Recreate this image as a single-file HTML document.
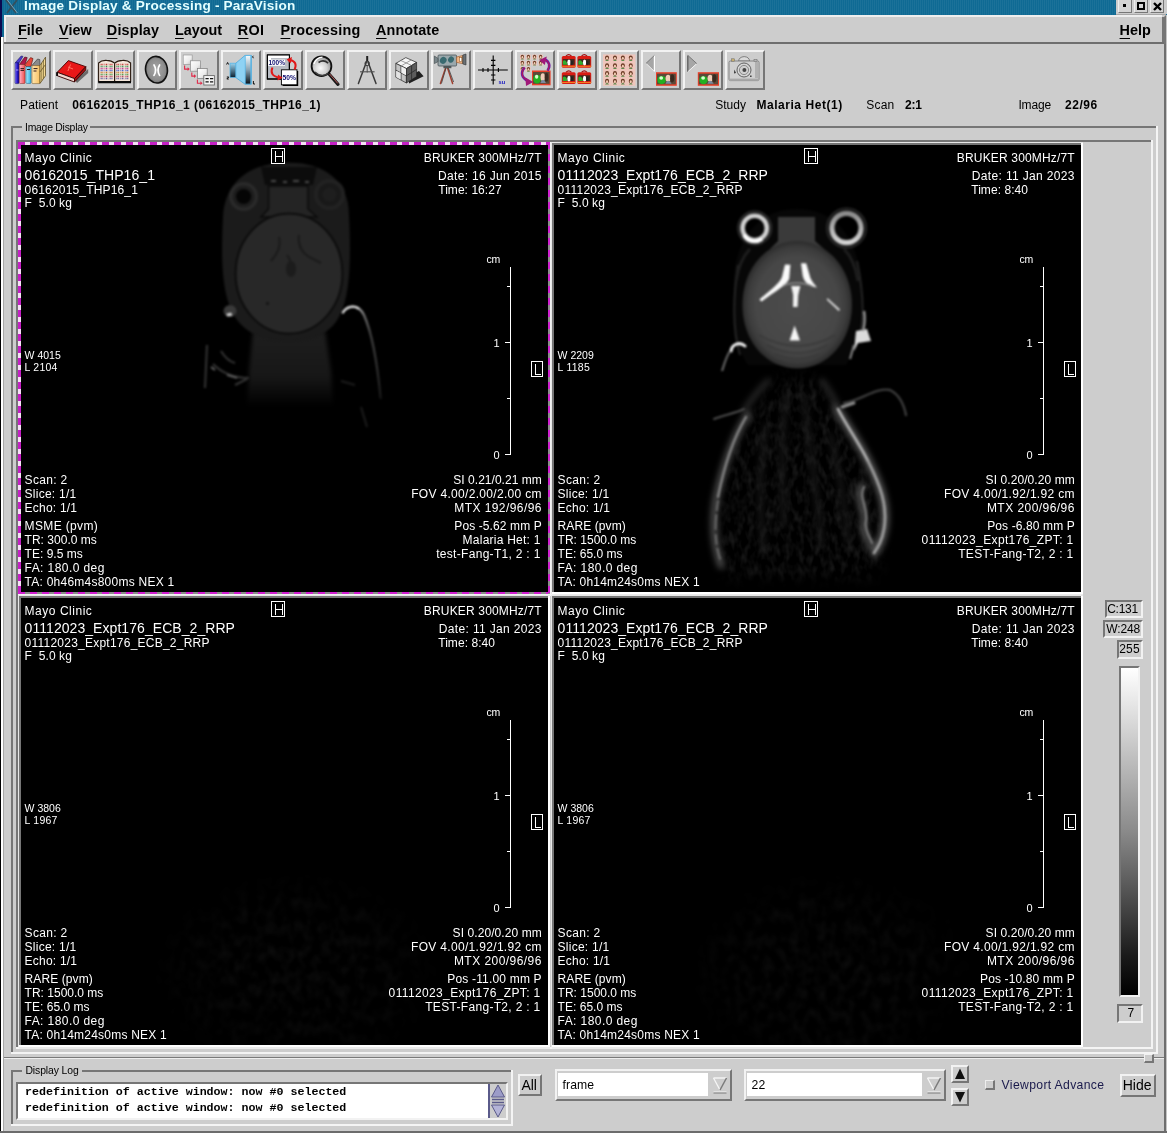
<!DOCTYPE html><html><head><meta charset="utf-8"><title>Image Display &amp; Processing - ParaVision</title><style>

html,body{margin:0;padding:0;}
body{width:1167px;height:1133px;overflow:hidden;background:#cdcdcd;position:relative;font-family:"Liberation Sans",sans-serif;color:#000;}
.a{position:absolute;}
.t{position:absolute;white-space:pre;line-height:14px;height:14px;}
.b{font-weight:bold;}
.raised{position:absolute;box-sizing:border-box;border:2px solid;border-color:#f2f2f2 #767676 #767676 #f2f2f2;background:#cdcdcd;}
.sunken{position:absolute;box-sizing:border-box;border:2px solid;border-color:#767676 #f2f2f2 #f2f2f2 #767676;}
.pt{position:absolute;white-space:pre;color:#fff;font-size:12.5px;line-height:14px;height:14px;}
.ptr{position:absolute;white-space:pre;color:#fff;font-size:12.5px;line-height:14px;height:14px;text-align:right;}
svg{position:absolute;overflow:visible;}

</style></head><body><div id="root" style="position:absolute;left:0;top:0;width:1167px;height:1133px;will-change:transform;">
<div class="a" style="left:0px;top:0px;width:1167px;height:15px;background:#0f6a94;background-image:repeating-linear-gradient(90deg,rgba(255,255,255,0.05) 0 1px,transparent 1px 2px);"></div>
<div class="a" style="left:0px;top:0px;width:2px;height:37px;background:#0a0a50;"></div>
<div class="a" style="left:2px;top:0px;width:2px;height:37px;background:#0f6a94;"></div>
<div class="a" style="left:0px;top:37px;width:1px;height:1096px;background:#000;"></div>
<div class="a" style="left:1px;top:37px;width:2px;height:1096px;background:#fff;"></div>
<div class="a" style="left:3px;top:37px;width:1px;height:1096px;background:#a8a8a8;"></div>
<svg style="left:4px;top:0" width="16" height="14" viewBox="0 0 16 14"><path d="M2 0 L12 13 M13 0 L3 13" stroke="#34505e" stroke-width="1.9" fill="none"/><path d="M3.4 0 L13.4 13" stroke="#8fb0c0" stroke-width="0.8" fill="none"/></svg>
<div class="t" style="left:24.0px;top:-1.49px;font-size:13.6px;font-weight:bold;color:#e4ffff;letter-spacing:0.188px;">Image Display &amp; Processing - ParaVision</div>
<div class="a" style="left:1116px;top:0px;width:51px;height:14px;background:#cdcdcd;"></div>
<div class="a" style="left:1116px;top:14px;width:50px;height:1px;background:#a8a8a8;"></div>
<div class="a" style="left:1118px;top:0px;width:14px;height:13px;background:#d4d4d4;border-right:1px solid #777;border-bottom:1px solid #777;border-left:1px solid #eee;box-sizing:border-box;"></div>
<div class="a" style="left:1134px;top:0px;width:14px;height:13px;background:#d4d4d4;border-right:1px solid #777;border-bottom:1px solid #777;border-left:1px solid #eee;box-sizing:border-box;"></div>
<div class="a" style="left:1150px;top:0px;width:14px;height:13px;background:#d4d4d4;border-right:1px solid #777;border-bottom:1px solid #777;border-left:1px solid #eee;box-sizing:border-box;"></div>
<div class="a" style="left:1123px;top:4px;width:3px;height:3px;background:#000;"></div>
<div class="a" style="left:1137px;top:2px;width:8px;height:8px;background:transparent;border:2px solid #000;box-sizing:border-box;"></div>
<svg style="left:1153px;top:2px" width="9" height="9" viewBox="0 0 9 9"><path d="M1 1 L8 8 M8 1 L1 8" stroke="#000" stroke-width="2.4" fill="none"/></svg>
<div class="a" style="left:1164px;top:44px;width:2px;height:1089px;background:#6e6e6e;"></div>
<div class="a" style="left:1166px;top:15px;width:1px;height:1118px;background:#c4c4c4;"></div>
<div class="a" style="left:1162px;top:17px;width:4px;height:27px;background:#767676;"></div>
<svg style="left:1162px;top:15px" width="4" height="4" viewBox="0 0 4 4"><path d="M4 0 L4 4 L0 4z" fill="#767676"/></svg>
<div class="a" style="left:0px;top:1131px;width:1167px;height:2px;background:#6c6c6c;"></div>
<div class="a" style="left:4px;top:15px;width:1158px;height:2px;background:#eeeeee;"></div>
<div class="a" style="left:4px;top:15px;width:2px;height:28px;background:#eeeeee;"></div>
<div class="a" style="left:4px;top:42px;width:1160px;height:2px;background:#6e6e6e;"></div>
<div class="t" style="left:18.0px;top:22.74px;font-size:14.4px;font-weight:bold;letter-spacing:0.026px;"><span style="text-decoration:underline;text-decoration-thickness:1px;text-underline-offset:2.5px">F</span>ile</div>
<div class="t" style="left:59.0px;top:22.74px;font-size:14.4px;font-weight:bold;letter-spacing:0.038px;"><span style="text-decoration:underline;text-decoration-thickness:1px;text-underline-offset:2.5px">V</span>iew</div>
<div class="t" style="left:106.8px;top:22.74px;font-size:14.4px;font-weight:bold;letter-spacing:0.171px;"><span style="text-decoration:underline;text-decoration-thickness:1px;text-underline-offset:2.5px">D</span>isplay</div>
<div class="t" style="left:175.0px;top:22.74px;font-size:14.4px;font-weight:bold;letter-spacing:-0.029px;"><span style="text-decoration:underline;text-decoration-thickness:1px;text-underline-offset:2.5px">L</span>ayout</div>
<div class="t" style="left:237.8px;top:22.74px;font-size:14.4px;font-weight:bold;letter-spacing:0.269px;"><span style="text-decoration:underline;text-decoration-thickness:1px;text-underline-offset:2.5px">R</span>OI</div>
<div class="t" style="left:280.5px;top:22.74px;font-size:14.4px;font-weight:bold;letter-spacing:0.241px;"><span style="text-decoration:underline;text-decoration-thickness:1px;text-underline-offset:2.5px">P</span>rocessing</div>
<div class="t" style="left:376px;top:22.74px;font-size:14.4px;font-weight:bold;letter-spacing:0.118px;"><span style="text-decoration:underline;text-decoration-thickness:1px;text-underline-offset:2.5px">A</span>nnotate</div>
<div class="t" style="left:1119.6px;top:22.74px;font-size:14.4px;font-weight:bold;letter-spacing:0.028px;"><span style="text-decoration:underline;text-decoration-thickness:1px;text-underline-offset:2.5px">H</span>elp</div>
<div class="t" style="left:20.0px;top:97.83px;font-size:12px;letter-spacing:0.134px;">Patient</div>
<div class="t" style="left:72.2px;top:97.83px;font-size:12px;font-weight:bold;letter-spacing:0.453px;">06162015_THP16_1 (06162015_THP16_1)</div>
<div class="t" style="left:715.2px;top:97.83px;font-size:12px;letter-spacing:0.042px;">Study</div>
<div class="t" style="left:756.4px;top:97.83px;font-size:12px;font-weight:bold;letter-spacing:0.550px;">Malaria Het(1)</div>
<div class="t" style="left:866.3px;top:97.83px;font-size:12px;letter-spacing:0.185px;">Scan</div>
<div class="t" style="left:905.0px;top:97.83px;font-size:12px;font-weight:bold;letter-spacing:-0.148px;">2:1</div>
<div class="t" style="left:1018.4px;top:97.83px;font-size:12px;letter-spacing:-0.132px;">Image</div>
<div class="t" style="left:1065.0px;top:97.83px;font-size:12px;font-weight:bold;letter-spacing:0.514px;">22/96</div>
<div class="raised" style="left:11px;top:50px;width:40px;height:40px;"></div>
<svg style="left:11px;top:50px" width="40" height="40" viewBox="0 0 40 40">
<defs><linearGradient id="gpk" x1="0" x2="1"><stop offset="0" stop-color="#ffb0c8"/><stop offset="1" stop-color="#f0504a"/></linearGradient>
<linearGradient id="gbl" x1="0" x2="1"><stop offset="0" stop-color="#9a8cff"/><stop offset="0.5" stop-color="#2a1ad0"/><stop offset="1" stop-color="#1a0a90"/></linearGradient>
<linearGradient id="gcy" x1="0" x2="1"><stop offset="0" stop-color="#a8ecff"/><stop offset="1" stop-color="#38b0e0"/></linearGradient>
<linearGradient id="gyl" x1="0" x2="1"><stop offset="0" stop-color="#ffe6b0"/><stop offset="1" stop-color="#f8c060"/></linearGradient></defs>
<path d="M4 13 L10.2 6 L12 6.4 L8 13z" fill="#4a3ad0" stroke="#181860" stroke-width="0.6"/>
<path d="M8.4 14.5 L13.8 7 L16.2 7.6 L14 14.5z" fill="#b01848" stroke="#400818" stroke-width="0.6"/>
<path d="M14 14.6 L19.6 7.6 L22 8.6 L19.8 16.6 L15 16.6z" fill="#e8483a" stroke="#501008" stroke-width="0.6"/>
<path d="M20.6 15.8 L26.6 9 L28.8 9.6 L29 15.8z" fill="#8a8a8a" stroke="#333" stroke-width="0.6"/>
<rect x="4" y="12.8" width="4" height="20.8" rx="0.8" fill="url(#gbl)" stroke="#101060" stroke-width="0.5"/>
<rect x="8.4" y="14.5" width="5.6" height="19" rx="0.8" fill="url(#gpk)" stroke="#802020" stroke-width="0.5"/>
<rect x="15" y="16.7" width="5" height="16.7" rx="0.8" fill="url(#gcy)" stroke="#105a80" stroke-width="0.5"/>
<rect x="21" y="15.6" width="8" height="18" rx="0.8" fill="url(#gyl)" stroke="#70501a" stroke-width="0.5"/>
<path d="M29 15.6 L34.5 7.2 L34.5 25.8 L29 33.4z" fill="#ffe49a" stroke="#5a4a20" stroke-width="0.8"/>
<path d="M30.8 12.8 L30.8 30.6 M32.6 10 L32.6 28.2 M29 22 L34.5 14.5" stroke="#5a4a20" stroke-width="0.7" fill="none"/>
<path d="M9.5 18.6h3.5 M9.5 20.4h3.5 M16 19.5h3 M22.5 18.6h4 M22.5 21h3" stroke="#301818" stroke-width="1"/>
<path d="M5 20h2.4" stroke="#c0b8ff" stroke-width="0.8"/>
</svg>
<div class="raised" style="left:53px;top:50px;width:40px;height:40px;"></div>
<svg style="left:53px;top:50px" width="40" height="40" viewBox="0 0 40 40">
<path d="M22 30 L35.2 19 L35.2 23 L24 33z" fill="#6a6a6a"/>
<path d="M4.2 22.3 L15.4 10.6 L32.8 16.7 L21.5 28.6z" fill="#e81818" stroke="#400" stroke-width="0.9"/>
<path d="M4.2 22.3 L21.5 28.6 L21.5 32 L4.4 25.8z" fill="#f4d8d0" stroke="#300" stroke-width="0.9"/>
<path d="M21.5 28.6 L32.8 16.7 L32.8 20 L21.5 32z" fill="#a01010" stroke="#300" stroke-width="0.8"/>
<path d="M4 22.2 L4 25.9" stroke="#000" stroke-width="1.6"/>
<path d="M15 17 l5 2 M17.5 14.5 l-2.6 6.5" stroke="#ff7a6a" stroke-width="0.9"/>
</svg>
<div class="raised" style="left:95px;top:50px;width:40px;height:40px;"></div>
<svg style="left:95px;top:50px" width="40" height="40" viewBox="0 0 40 40">
<path d="M3.6 13 q3 -3 8 -2.6 q5 0 8 2.8 q3 -2.8 8 -2.8 q5 -0.4 8 2.6 L35.6 31.5 L3.6 31.5z" fill="#f4e6da" stroke="#2a1a10" stroke-width="1.1"/>
<path d="M3.2 31 L36 31 L36 33.2 L3.2 33.2z" fill="#0a0a0a"/>
<path d="M19.6 13.2 L19.6 31" stroke="#2a1a10" stroke-width="1.2"/>
<g stroke-width="1.5" stroke-dasharray="1.1 0.7">
<path d="M5.6 14.6h12.4 M21.4 14.6h12.4" stroke="#c83838"/><path d="M5.6 16.6h12.4 M21.4 16.6h12.4" stroke="#309858"/>
<path d="M5.6 18.6h12.4 M21.4 18.6h12.4" stroke="#c03090"/><path d="M5.6 20.6h12.4 M21.4 20.6h12.4" stroke="#3858c8"/>
<path d="M5.6 22.6h12.4 M21.4 22.6h12.4" stroke="#c87828"/><path d="M5.6 24.6h12.4 M21.4 24.6h12.4" stroke="#409848"/>
<path d="M5.6 26.6h12.4 M21.4 26.6h12.4" stroke="#b03858"/><path d="M5.6 28.6h12.4 M21.4 28.6h12.4" stroke="#5a5a9a"/></g>
<path d="M9 13.5 v16 M13.4 13.5 v16 M25 13.5 v16 M29.6 13.5 v16" stroke="#f4e6da" stroke-width="0.9"/>
</svg>
<div class="raised" style="left:137px;top:50px;width:40px;height:40px;"></div>
<svg style="left:137px;top:50px" width="40" height="40" viewBox="0 0 40 40">
<defs><radialGradient id="gbr"><stop offset="0" stop-color="#a8a8a8"/><stop offset="0.8" stop-color="#8c8c8c"/><stop offset="1" stop-color="#707070"/></radialGradient></defs>
<ellipse cx="19.5" cy="19.7" rx="10.9" ry="13.4" fill="url(#gbr)" stroke="#101010" stroke-width="1.6" transform="rotate(-8 19.5 19.7)"/>
<path d="M17 15 q3.2 5 0 10.4 M22.6 15 q-3.2 5 0 10.4" stroke="#fff" stroke-width="1.7" fill="none" stroke-linecap="round"/>
</svg>
<div class="raised" style="left:179px;top:50px;width:40px;height:40px;"></div>
<svg style="left:179px;top:50px" width="40" height="40" viewBox="0 0 40 40">
<defs><linearGradient id="gsq" x1="0" y1="0" x2="1" y2="1"><stop offset="0" stop-color="#fff"/><stop offset="0.6" stop-color="#ececec"/><stop offset="1" stop-color="#b8b8b8"/></linearGradient></defs>
<rect x="4.2" y="5" width="9" height="9.4" fill="url(#gsq)" stroke="#9a9a9a" stroke-width="0.7"/>
<rect x="11.4" y="10.8" width="10" height="10.4" fill="url(#gsq)" stroke="#8a8a8a" stroke-width="0.7"/>
<rect x="18.6" y="18.6" width="9.6" height="9.8" fill="url(#gsq)" stroke="#7a7a7a" stroke-width="0.7"/>
<rect x="24.8" y="25.6" width="10.6" height="9.4" fill="#f4f4f4" stroke="#6a6a6a" stroke-width="0.9"/>
<path d="M26.5 28.6h3.2 M31 28.6h3.2 M26.5 31.8h3.2 M31 31.8h3.2" stroke="#111" stroke-width="1.3"/>
<path d="M5.6 15.5 v3.6 h3.4 M12.8 22.5 v3.6 h2.6 M18.4 29.6 v3.6 h3.4" stroke="#e02848" stroke-width="1.1" fill="none"/>
<path d="M8.6 17.2 l2.2 1.9 l-2.2 1.9z M15 24.2 l2.2 1.9 l-2.2 1.9z M21.4 31.3 l2.2 1.9 l-2.2 1.9z" fill="#e02848"/>
</svg>
<div class="raised" style="left:221px;top:50px;width:40px;height:40px;"></div>
<svg style="left:221px;top:50px" width="40" height="40" viewBox="0 0 40 40">
<defs><linearGradient id="glv1" x1="0" y1="0" x2="0" y2="1"><stop offset="0" stop-color="#9ad4f0"/><stop offset="1" stop-color="#0a2030"/></linearGradient>
<linearGradient id="glv2" x1="0" y1="0" x2="0" y2="1"><stop offset="0" stop-color="#f4fbff"/><stop offset="0.5" stop-color="#8aa4b4"/><stop offset="1" stop-color="#081018"/></linearGradient></defs>
<path d="M14.6 13.4 L24 5.4 L30.4 5.4 L30.4 34.2 L24 34.2 L14.6 27.4z" fill="#8ed2f4" stroke="#48a8dc" stroke-width="0.8"/>
<rect x="9" y="13.2" width="5.8" height="14.2" fill="url(#glv1)" stroke="#58b4e4" stroke-width="0.8"/>
<rect x="24.2" y="5.6" width="5.6" height="28.4" fill="url(#glv2)" stroke="#58b4e4" stroke-width="0.8"/>
<path d="M5.6 14.5 l1 -2 l1 2 M5.8 27 h2 l-2 2 h2 M32.4 5.8 q-1.6 0.8 0 2.4 M32.4 31 v3 h1.6" stroke="#000" stroke-width="0.9" fill="none"/>
</svg>
<div class="raised" style="left:263px;top:50px;width:40px;height:40px;"></div>
<svg style="left:263px;top:50px" width="40" height="40" viewBox="0 0 40 40">
<rect x="4.4" y="5" width="22" height="24" fill="#b8bcc4" stroke="#000" stroke-width="1.1"/>
<path d="M4.4 12.6 L4.4 5 L26.4 5 L26.4 8 L8 8 L8 12.6z" fill="#fff"/>
<rect x="4.4" y="5" width="22" height="24" fill="none" stroke="#000" stroke-width="1.1"/>
<rect x="5" y="9.6" width="17" height="6.2" fill="#fff"/>
<rect x="19.6" y="21" width="15.6" height="15" fill="#000"/>
<rect x="18.4" y="19.8" width="15.6" height="15" fill="#fff" stroke="#000" stroke-width="0.9"/>
<text x="5.4" y="15" font-family="Liberation Sans" font-weight="bold" font-size="6.6" fill="#101070" textLength="16.6" lengthAdjust="spacingAndGlyphs">100%</text>
<text x="19.6" y="30.4" font-family="Liberation Sans" font-weight="bold" font-size="6.8" fill="#101070" textLength="13.4" lengthAdjust="spacingAndGlyphs">50%</text>
<path d="M9.4 17.5 q-3.2 8.5 7 10" stroke="#e01818" stroke-width="2" fill="none"/><path d="M15 24.6 l4.6 3.2 l-5 2.8z" fill="#e01818"/>
<path d="M31.6 19.6 q3.4 -7.8 -4.6 -9.6" stroke="#e01818" stroke-width="2" fill="none"/><path d="M29 7 l-5.4 2.6 l4 4z" fill="#e01818"/>
</svg>
<div class="raised" style="left:305px;top:50px;width:40px;height:40px;"></div>
<svg style="left:305px;top:50px" width="40" height="40" viewBox="0 0 40 40">
<defs><radialGradient id="gmg" cx="0.45" cy="0.6" r="0.6"><stop offset="0" stop-color="#fafafa"/><stop offset="0.55" stop-color="#d0d0d0"/><stop offset="1" stop-color="#8a8a8a"/></radialGradient></defs>
<path d="M24 24 L33 34.4" stroke="#181818" stroke-width="3.2" stroke-linecap="round"/>
<path d="M24.6 24 L32.8 33.4" stroke="#c86060" stroke-width="0.9"/>
<circle cx="16.5" cy="16.2" r="9.9" fill="url(#gmg)" stroke="#101010" stroke-width="1.8"/>
<path d="M9 14 q2 -6.5 8.5 -6.8" stroke="#fff" stroke-width="1.3" fill="none"/>
<path d="M13.5 12.5 q5 -3.4 9.6 0.6" stroke="#303030" stroke-width="1.6" fill="none"/>
<path d="M10 22 q6 6 13.4 1.5" stroke="#404040" stroke-width="1.2" fill="none"/>
</svg>
<div class="raised" style="left:347px;top:50px;width:40px;height:40px;"></div>
<svg style="left:347px;top:50px" width="40" height="40" viewBox="0 0 40 40">
<path d="M20.2 6 L20.2 11" stroke="#202020" stroke-width="2"/>
<circle cx="20.2" cy="13.4" r="2.2" fill="none" stroke="#303030" stroke-width="1"/>
<path d="M19.4 12 L11.4 33.6 M21 12 L29 33.6" stroke="#3a3a3a" stroke-width="1.5" fill="none" stroke-linecap="round"/>
<path d="M13 21.8 L27.6 21.8" stroke="#505050" stroke-width="1.1"/>
<path d="M20.2 15.6 L20.2 22.5" stroke="#505050" stroke-width="1"/>
</svg>
<div class="raised" style="left:389px;top:50px;width:40px;height:40px;"></div>
<svg style="left:389px;top:50px" width="40" height="40" viewBox="0 0 40 40">
<path d="M20 33.5 L34.6 26.2 L30 21 L20 26z" fill="#202020"/>
<path d="M6.8 13.4 L16.8 7.6 L27.6 12.4 L17.4 18.6z" fill="#f6f6f6" stroke="#222" stroke-width="0.7"/>
<path d="M6.8 13.4 L17.4 18.6 L17.4 33 L6.8 27.2z" fill="#c4c4c4" stroke="#222" stroke-width="0.7"/>
<path d="M17.4 18.6 L27.6 12.4 L27.6 26.6 L17.4 33z" fill="#5c5c5c" stroke="#222" stroke-width="0.7"/>
<path d="M11.8 10.5 L22.6 15.4 M12 16 L22.2 10" stroke="#8a8a8a" stroke-width="0.8"/>
<path d="M6.8 20.2 L17.4 25.8 L27.6 19.4 M12 16.2 L12 30 M22.6 15.4 L22.6 29.8" stroke="#2a2a2a" stroke-width="0.8" fill="none"/>
<path d="M12.4 16.6 L17 18.9 L17 25.2 L12.4 22.8z" fill="#f0f0f0"/>
<path d="M7.2 20.8 L11.6 23 L11.6 29.4 L7.2 27z" fill="#e4e4e4"/>
</svg>
<div class="raised" style="left:431px;top:50px;width:40px;height:40px;"></div>
<svg style="left:431px;top:50px" width="40" height="40" viewBox="0 0 40 40">
<path d="M14.6 18 L9.4 33.6 M16.6 18 L21.6 33.6" stroke="#a04030" stroke-width="1.5" stroke-linecap="round"/>
<path d="M15 18 L10.4 33.6 M17.4 18 L22.6 32" stroke="#404040" stroke-width="0.8"/>
<rect x="12.4" y="15.8" width="8" height="2.4" fill="#505858"/>
<rect x="7" y="5" width="18.6" height="11" rx="1" fill="#9aa8ac" stroke="#4a5458" stroke-width="0.8"/>
<path d="M3.4 6 L7 8.4 L7 11.6 L3.4 13.6z" fill="#7a868a" stroke="#3a4448" stroke-width="0.6"/>
<ellipse cx="12.2" cy="10.4" rx="3.2" ry="3.6" fill="#3a6a70" transform="rotate(35 12.2 10.4)"/>
<ellipse cx="20" cy="9.6" rx="2.8" ry="3.2" fill="#3a6a70" transform="rotate(35 20 9.6)"/>
<path d="M25.6 7 L31.6 5.6 L31.6 13.6 L25.6 12.4z" fill="#f4b888" stroke="#a06030" stroke-width="0.7"/>
<rect x="28.6" y="7.6" width="2.2" height="4" fill="#fff" stroke="#805020" stroke-width="0.5"/>
<path d="M31.8 5 L35 4 L35 15 L31.8 14z" fill="#6a7074" stroke="#303436" stroke-width="0.6"/>
</svg>
<div class="raised" style="left:473px;top:50px;width:40px;height:40px;"></div>
<svg style="left:473px;top:50px" width="40" height="40" viewBox="0 0 40 40">
<path d="M5 20 H34.8 M20.2 5.4 V34.6" stroke="#000" stroke-width="1.1"/>
<path d="M18 10.4h4.4 M18 15.4h4.4 M18 25h4.4 M18 30h4.4 M10 18v4 M15 18v4 M25.4 18v4" stroke="#000" stroke-width="1.1"/>
<text x="25.6" y="34.4" font-family="Liberation Sans" font-weight="bold" font-size="5.6" fill="#1010c0">su</text>
</svg>
<div class="raised" style="left:515px;top:50px;width:40px;height:40px;"></div>
<svg style="left:515px;top:50px" width="40" height="40" viewBox="0 0 40 40"><rect x="5.0" y="4.6" width="4.68" height="4.992000000000001" fill="#efc6bc"/><path d="M5.78 9.436 q1.56 -2.34 3.12 0z" fill="#5b8a4a"/><ellipse cx="7.34" cy="6.628" rx="1.6380000000000001" ry="1.8719999999999999" fill="#6b3a24"/><ellipse cx="7.34" cy="7.1739999999999995" rx="0.8580000000000001" ry="1.17" fill="#f2cdb4"/><rect x="11.1" y="4.6" width="4.68" height="4.992000000000001" fill="#efc6bc"/><path d="M11.879999999999999 9.436 q1.56 -2.34 3.12 0z" fill="#5b8a4a"/><ellipse cx="13.44" cy="6.628" rx="1.6380000000000001" ry="1.8719999999999999" fill="#6b3a24"/><ellipse cx="13.44" cy="7.1739999999999995" rx="0.8580000000000001" ry="1.17" fill="#f2cdb4"/><rect x="17.2" y="4.6" width="4.68" height="4.992000000000001" fill="#efc6bc"/><path d="M17.98 9.436 q1.56 -2.34 3.12 0z" fill="#5b8a4a"/><ellipse cx="19.54" cy="6.628" rx="1.6380000000000001" ry="1.8719999999999999" fill="#6b3a24"/><ellipse cx="19.54" cy="7.1739999999999995" rx="0.8580000000000001" ry="1.17" fill="#f2cdb4"/><rect x="23.299999999999997" y="4.6" width="4.68" height="4.992000000000001" fill="#efc6bc"/><path d="M24.08 9.436 q1.56 -2.34 3.12 0z" fill="#5b8a4a"/><ellipse cx="25.639999999999997" cy="6.628" rx="1.6380000000000001" ry="1.8719999999999999" fill="#6b3a24"/><ellipse cx="25.639999999999997" cy="7.1739999999999995" rx="0.8580000000000001" ry="1.17" fill="#f2cdb4"/><rect x="5.0" y="10.7" width="4.68" height="4.992000000000001" fill="#efc6bc"/><path d="M5.78 15.536 q1.56 -2.34 3.12 0z" fill="#5b8a4a"/><ellipse cx="7.34" cy="12.728" rx="1.6380000000000001" ry="1.8719999999999999" fill="#6b3a24"/><ellipse cx="7.34" cy="13.274" rx="0.8580000000000001" ry="1.17" fill="#f2cdb4"/><rect x="11.1" y="10.7" width="4.68" height="4.992000000000001" fill="#efc6bc"/><path d="M11.879999999999999 15.536 q1.56 -2.34 3.12 0z" fill="#5b8a4a"/><ellipse cx="13.44" cy="12.728" rx="1.6380000000000001" ry="1.8719999999999999" fill="#6b3a24"/><ellipse cx="13.44" cy="13.274" rx="0.8580000000000001" ry="1.17" fill="#f2cdb4"/><rect x="17.2" y="10.7" width="4.68" height="4.992000000000001" fill="#efc6bc"/><path d="M17.98 15.536 q1.56 -2.34 3.12 0z" fill="#5b8a4a"/><ellipse cx="19.54" cy="12.728" rx="1.6380000000000001" ry="1.8719999999999999" fill="#6b3a24"/><ellipse cx="19.54" cy="13.274" rx="0.8580000000000001" ry="1.17" fill="#f2cdb4"/><rect x="23.299999999999997" y="10.7" width="4.68" height="4.992000000000001" fill="#efc6bc"/><path d="M24.08 15.536 q1.56 -2.34 3.12 0z" fill="#5b8a4a"/><ellipse cx="25.639999999999997" cy="12.728" rx="1.6380000000000001" ry="1.8719999999999999" fill="#6b3a24"/><ellipse cx="25.639999999999997" cy="13.274" rx="0.8580000000000001" ry="1.17" fill="#f2cdb4"/><rect x="5.0" y="16.799999999999997" width="4.68" height="4.992000000000001" fill="#efc6bc"/><path d="M5.78 21.635999999999996 q1.56 -2.34 3.12 0z" fill="#5b8a4a"/><ellipse cx="7.34" cy="18.827999999999996" rx="1.6380000000000001" ry="1.8719999999999999" fill="#6b3a24"/><ellipse cx="7.34" cy="19.373999999999995" rx="0.8580000000000001" ry="1.17" fill="#f2cdb4"/><rect x="11.1" y="16.799999999999997" width="4.68" height="4.992000000000001" fill="#efc6bc"/><path d="M11.879999999999999 21.635999999999996 q1.56 -2.34 3.12 0z" fill="#5b8a4a"/><ellipse cx="13.44" cy="18.827999999999996" rx="1.6380000000000001" ry="1.8719999999999999" fill="#6b3a24"/><ellipse cx="13.44" cy="19.373999999999995" rx="0.8580000000000001" ry="1.17" fill="#f2cdb4"/><rect x="17" y="20.5" width="18.6" height="14.8" fill="#e8402a"/><rect x="18" y="22.0" width="16.6" height="11.8" fill="#5a4a3a"/><ellipse cx="22.022000000000002" cy="29.084" rx="3.7200000000000006" ry="4.44" fill="#22b022"/><ellipse cx="21.65" cy="26.716" rx="1.6740000000000002" ry="1.9240000000000002" fill="#d8ffd0"/><ellipse cx="27.788" cy="27.16" rx="2.232" ry="3.8480000000000003" fill="#f0cdb8"/><path d="M25.37 33.08 q2.418 -6.66 5.58 0z" fill="#7a8aa0"/><ellipse cx="31.508000000000003" cy="27.16" rx="1.8600000000000003" ry="4.44" fill="#3a2a20"/>
<path d="M9.6 17.5 q-6.5 8 3.4 13.6" stroke="#6a1aa8" stroke-width="2.6" fill="none"/><path d="M9.6 17.5 q-6.5 8 3.4 13.6" stroke="#c01848" stroke-width="1" fill="none"/>
<path d="M10.4 27.6 l8 4.4 l-7.4 4z" fill="#a01878"/>
<path d="M32.6 20.6 q4.6 -7.4 -3.4 -11.6" stroke="#6a1aa8" stroke-width="2.6" fill="none"/><path d="M32.6 20.6 q4.6 -7.4 -3.4 -11.6" stroke="#c01848" stroke-width="1" fill="none"/>
<path d="M31.8 6.6 l-7.6 3.4 l5.6 5z" fill="#a01878"/>
</svg>
<div class="raised" style="left:557px;top:50px;width:40px;height:40px;"></div>
<svg style="left:557px;top:50px" width="40" height="40" viewBox="0 0 40 40"><path d="M8.94 6.1 q2.7600000000000002 -3 5.5200000000000005 0" stroke="#a01010" stroke-width="1.2" fill="none"/><rect x="4.8" y="6.1" width="13.8" height="11.7" rx="1.5" fill="#d81c14"/><rect x="5.8" y="9.1" width="11.8" height="5.699999999999999" fill="#40281c"/><path d="M5.8 14.799999999999997 L5.8 11.1 q2.208 -2 4.14 1.5 L10.596 14.799999999999997z" fill="#2fae2f"/><ellipse cx="11.976" cy="12.52" rx="1.656" ry="2.904" fill="#fff"/><ellipse cx="14.736" cy="12.783999999999999" rx="1.242" ry="2.376" fill="#222"/><rect x="4.8" y="15.799999999999997" width="13.8" height="1" fill="#f08020"/><path d="M24.54 6.1 q2.7600000000000002 -3 5.5200000000000005 0" stroke="#a01010" stroke-width="1.2" fill="none"/><rect x="20.4" y="6.1" width="13.8" height="11.7" rx="1.5" fill="#d81c14"/><rect x="21.4" y="9.1" width="11.8" height="5.699999999999999" fill="#40281c"/><path d="M21.4 14.799999999999997 L21.4 11.1 q2.208 -2 4.14 1.5 L26.195999999999998 14.799999999999997z" fill="#2fae2f"/><ellipse cx="27.576" cy="12.52" rx="1.656" ry="2.904" fill="#fff"/><ellipse cx="30.336" cy="12.783999999999999" rx="1.242" ry="2.376" fill="#222"/><rect x="20.4" y="15.799999999999997" width="13.8" height="1" fill="#f08020"/><path d="M8.94 22.3 q2.7600000000000002 -3 5.5200000000000005 0" stroke="#a01010" stroke-width="1.2" fill="none"/><rect x="4.8" y="22.3" width="13.8" height="11.7" rx="1.5" fill="#d81c14"/><rect x="5.8" y="25.3" width="11.8" height="5.699999999999999" fill="#40281c"/><path d="M5.8 31.0 L5.8 27.3 q2.208 -2 4.14 1.5 L10.596 31.0z" fill="#2fae2f"/><ellipse cx="11.976" cy="28.72" rx="1.656" ry="2.904" fill="#fff"/><ellipse cx="14.736" cy="28.984" rx="1.242" ry="2.376" fill="#222"/><rect x="4.8" y="32.0" width="13.8" height="1" fill="#f08020"/><path d="M24.54 22.3 q2.7600000000000002 -3 5.5200000000000005 0" stroke="#a01010" stroke-width="1.2" fill="none"/><rect x="20.4" y="22.3" width="13.8" height="11.7" rx="1.5" fill="#d81c14"/><rect x="21.4" y="25.3" width="11.8" height="5.699999999999999" fill="#40281c"/><path d="M21.4 31.0 L21.4 27.3 q2.208 -2 4.14 1.5 L26.195999999999998 31.0z" fill="#2fae2f"/><ellipse cx="27.576" cy="28.72" rx="1.656" ry="2.904" fill="#fff"/><ellipse cx="30.336" cy="28.984" rx="1.242" ry="2.376" fill="#222"/><rect x="20.4" y="32.0" width="13.8" height="1" fill="#f08020"/></svg>
<div class="raised" style="left:599px;top:50px;width:40px;height:40px;"></div>
<svg style="left:599px;top:50px" width="40" height="40" viewBox="0 0 40 40"><rect x="4" y="4.4" width="32.4" height="31.4" fill="#efc6bc"/><rect x="5.2" y="5.2" width="5.699999999999999" height="6.08" fill="#efc6bc"/><path d="M6.15 11.09 q1.9 -2.8499999999999996 3.8 0z" fill="#5b8a4a"/><ellipse cx="8.05" cy="7.67" rx="1.9949999999999999" ry="2.28" fill="#6b3a24"/><ellipse cx="8.05" cy="8.335" rx="1.045" ry="1.4249999999999998" fill="#f2cdb4"/><rect x="13.100000000000001" y="5.2" width="5.699999999999999" height="6.08" fill="#efc6bc"/><path d="M14.05 11.09 q1.9 -2.8499999999999996 3.8 0z" fill="#5b8a4a"/><ellipse cx="15.950000000000001" cy="7.67" rx="1.9949999999999999" ry="2.28" fill="#6b3a24"/><ellipse cx="15.950000000000001" cy="8.335" rx="1.045" ry="1.4249999999999998" fill="#f2cdb4"/><rect x="21.0" y="5.2" width="5.699999999999999" height="6.08" fill="#efc6bc"/><path d="M21.95 11.09 q1.9 -2.8499999999999996 3.8 0z" fill="#5b8a4a"/><ellipse cx="23.85" cy="7.67" rx="1.9949999999999999" ry="2.28" fill="#6b3a24"/><ellipse cx="23.85" cy="8.335" rx="1.045" ry="1.4249999999999998" fill="#f2cdb4"/><rect x="28.900000000000002" y="5.2" width="5.699999999999999" height="6.08" fill="#efc6bc"/><path d="M29.85 11.09 q1.9 -2.8499999999999996 3.8 0z" fill="#5b8a4a"/><ellipse cx="31.75" cy="7.67" rx="1.9949999999999999" ry="2.28" fill="#6b3a24"/><ellipse cx="31.75" cy="8.335" rx="1.045" ry="1.4249999999999998" fill="#f2cdb4"/><rect x="5.2" y="13.0" width="5.699999999999999" height="6.08" fill="#efc6bc"/><path d="M6.15 18.89 q1.9 -2.8499999999999996 3.8 0z" fill="#5b8a4a"/><ellipse cx="8.05" cy="15.469999999999999" rx="1.9949999999999999" ry="2.28" fill="#6b3a24"/><ellipse cx="8.05" cy="16.134999999999998" rx="1.045" ry="1.4249999999999998" fill="#f2cdb4"/><rect x="13.100000000000001" y="13.0" width="5.699999999999999" height="6.08" fill="#efc6bc"/><path d="M14.05 18.89 q1.9 -2.8499999999999996 3.8 0z" fill="#5b8a4a"/><ellipse cx="15.950000000000001" cy="15.469999999999999" rx="1.9949999999999999" ry="2.28" fill="#6b3a24"/><ellipse cx="15.950000000000001" cy="16.134999999999998" rx="1.045" ry="1.4249999999999998" fill="#f2cdb4"/><rect x="21.0" y="13.0" width="5.699999999999999" height="6.08" fill="#efc6bc"/><path d="M21.95 18.89 q1.9 -2.8499999999999996 3.8 0z" fill="#5b8a4a"/><ellipse cx="23.85" cy="15.469999999999999" rx="1.9949999999999999" ry="2.28" fill="#6b3a24"/><ellipse cx="23.85" cy="16.134999999999998" rx="1.045" ry="1.4249999999999998" fill="#f2cdb4"/><rect x="28.900000000000002" y="13.0" width="5.699999999999999" height="6.08" fill="#efc6bc"/><path d="M29.85 18.89 q1.9 -2.8499999999999996 3.8 0z" fill="#5b8a4a"/><ellipse cx="31.75" cy="15.469999999999999" rx="1.9949999999999999" ry="2.28" fill="#6b3a24"/><ellipse cx="31.75" cy="16.134999999999998" rx="1.045" ry="1.4249999999999998" fill="#f2cdb4"/><rect x="5.2" y="20.8" width="5.699999999999999" height="6.08" fill="#efc6bc"/><path d="M6.15 26.69 q1.9 -2.8499999999999996 3.8 0z" fill="#5b8a4a"/><ellipse cx="8.05" cy="23.27" rx="1.9949999999999999" ry="2.28" fill="#6b3a24"/><ellipse cx="8.05" cy="23.935000000000002" rx="1.045" ry="1.4249999999999998" fill="#f2cdb4"/><rect x="13.100000000000001" y="20.8" width="5.699999999999999" height="6.08" fill="#efc6bc"/><path d="M14.05 26.69 q1.9 -2.8499999999999996 3.8 0z" fill="#5b8a4a"/><ellipse cx="15.950000000000001" cy="23.27" rx="1.9949999999999999" ry="2.28" fill="#6b3a24"/><ellipse cx="15.950000000000001" cy="23.935000000000002" rx="1.045" ry="1.4249999999999998" fill="#f2cdb4"/><rect x="21.0" y="20.8" width="5.699999999999999" height="6.08" fill="#efc6bc"/><path d="M21.95 26.69 q1.9 -2.8499999999999996 3.8 0z" fill="#5b8a4a"/><ellipse cx="23.85" cy="23.27" rx="1.9949999999999999" ry="2.28" fill="#6b3a24"/><ellipse cx="23.85" cy="23.935000000000002" rx="1.045" ry="1.4249999999999998" fill="#f2cdb4"/><rect x="28.900000000000002" y="20.8" width="5.699999999999999" height="6.08" fill="#efc6bc"/><path d="M29.85 26.69 q1.9 -2.8499999999999996 3.8 0z" fill="#5b8a4a"/><ellipse cx="31.75" cy="23.27" rx="1.9949999999999999" ry="2.28" fill="#6b3a24"/><ellipse cx="31.75" cy="23.935000000000002" rx="1.045" ry="1.4249999999999998" fill="#f2cdb4"/><rect x="5.2" y="28.599999999999998" width="5.699999999999999" height="6.08" fill="#efc6bc"/><path d="M6.15 34.489999999999995 q1.9 -2.8499999999999996 3.8 0z" fill="#5b8a4a"/><ellipse cx="8.05" cy="31.069999999999997" rx="1.9949999999999999" ry="2.28" fill="#6b3a24"/><ellipse cx="8.05" cy="31.735" rx="1.045" ry="1.4249999999999998" fill="#f2cdb4"/><rect x="13.100000000000001" y="28.599999999999998" width="5.699999999999999" height="6.08" fill="#efc6bc"/><path d="M14.05 34.489999999999995 q1.9 -2.8499999999999996 3.8 0z" fill="#5b8a4a"/><ellipse cx="15.950000000000001" cy="31.069999999999997" rx="1.9949999999999999" ry="2.28" fill="#6b3a24"/><ellipse cx="15.950000000000001" cy="31.735" rx="1.045" ry="1.4249999999999998" fill="#f2cdb4"/><rect x="21.0" y="28.599999999999998" width="5.699999999999999" height="6.08" fill="#efc6bc"/><path d="M21.95 34.489999999999995 q1.9 -2.8499999999999996 3.8 0z" fill="#5b8a4a"/><ellipse cx="23.85" cy="31.069999999999997" rx="1.9949999999999999" ry="2.28" fill="#6b3a24"/><ellipse cx="23.85" cy="31.735" rx="1.045" ry="1.4249999999999998" fill="#f2cdb4"/><rect x="28.900000000000002" y="28.599999999999998" width="5.699999999999999" height="6.08" fill="#efc6bc"/><path d="M29.85 34.489999999999995 q1.9 -2.8499999999999996 3.8 0z" fill="#5b8a4a"/><ellipse cx="31.75" cy="31.069999999999997" rx="1.9949999999999999" ry="2.28" fill="#6b3a24"/><ellipse cx="31.75" cy="31.735" rx="1.045" ry="1.4249999999999998" fill="#f2cdb4"/></svg>
<div class="raised" style="left:641px;top:50px;width:40px;height:40px;"></div>
<svg style="left:641px;top:50px" width="40" height="40" viewBox="0 0 40 40"><path d="M13.4 5.4 L13.4 21.4 L5 13.4z" fill="#a6a6a6"/><path d="M13.4 5.4 L13.4 21.4" stroke="#fff" stroke-width="1.2"/><path d="M13.4 21.4 L5 13.4" stroke="#f4f4f4" stroke-width="0.9"/><path d="M13.4 5.4 L5 13.4" stroke="#707070" stroke-width="0.9"/><rect x="15" y="22.2" width="20.8" height="13.6" fill="#e8402a"/><rect x="16" y="23.7" width="18.8" height="10.6" fill="#5a4a3a"/><ellipse cx="20.616" cy="30.087999999999997" rx="4.16" ry="4.08" fill="#22b022"/><ellipse cx="20.2" cy="27.912" rx="1.8719999999999999" ry="1.768" fill="#d8ffd0"/><ellipse cx="27.064" cy="28.32" rx="2.496" ry="3.536" fill="#f0cdb8"/><path d="M24.36 33.76 q2.704 -6.12 6.24 0z" fill="#7a8aa0"/><ellipse cx="31.224" cy="28.32" rx="2.08" ry="4.08" fill="#3a2a20"/></svg>
<div class="raised" style="left:683px;top:50px;width:40px;height:40px;"></div>
<svg style="left:683px;top:50px" width="40" height="40" viewBox="0 0 40 40"><path d="M4.8 5.4 L4.8 21.8 L13.8 13.6z" fill="#a6a6a6"/><path d="M4.8 5.4 L4.8 21.8" stroke="#555" stroke-width="1.2"/><path d="M4.8 21.8 L13.8 13.6" stroke="#f4f4f4" stroke-width="1"/><path d="M4.8 5.4 L13.8 13.6" stroke="#707070" stroke-width="0.9"/><rect x="14.8" y="22.2" width="21.2" height="13.6" fill="#e8402a"/><rect x="15.8" y="23.7" width="19.2" height="10.6" fill="#5a4a3a"/><ellipse cx="20.524" cy="30.087999999999997" rx="4.24" ry="4.08" fill="#22b022"/><ellipse cx="20.1" cy="27.912" rx="1.908" ry="1.768" fill="#d8ffd0"/><ellipse cx="27.096" cy="28.32" rx="2.544" ry="3.536" fill="#f0cdb8"/><path d="M24.34 33.76 q2.756 -6.12 6.359999999999999 0z" fill="#7a8aa0"/><ellipse cx="31.336000000000002" cy="28.32" rx="2.12" ry="4.08" fill="#3a2a20"/></svg>
<div class="raised" style="left:725px;top:50px;width:40px;height:40px;"></div>
<svg style="left:725px;top:50px" width="40" height="40" viewBox="0 0 40 40">
<path d="M13.6 11 q0.4 -4 5.6 -4.4 q5 0.4 5.4 4.4z" fill="#dadada" stroke="#6a6a6a" stroke-width="0.8"/>
<rect x="4" y="11" width="30" height="19.6" rx="1.4" fill="#d0d0d0" stroke="#7a7a7a" stroke-width="0.9"/>
<rect x="4" y="28.6" width="30" height="2.2" fill="#a8a8a8"/>
<rect x="30" y="12" width="3.6" height="16" fill="#b0b0b0"/>
<rect x="6.4" y="8.8" width="3.2" height="2.4" fill="#c8b070" stroke="#6a6a6a" stroke-width="0.5"/>
<rect x="29" y="9.4" width="3" height="1.8" fill="#bbb" stroke="#6a6a6a" stroke-width="0.5"/>
<circle cx="19" cy="20" r="7" fill="#d6d6d6" stroke="#555" stroke-width="0.9"/>
<circle cx="19" cy="20" r="4.6" fill="#cfcfcf" stroke="#777" stroke-width="0.8"/>
<circle cx="19.4" cy="20" r="2" fill="#444"/>
<path d="M9.4 19.5 l1.6 3.4 l-2 0.6z" fill="#333"/><rect x="25" y="25.6" width="1.6" height="1.2" fill="#222"/>
</svg>
<div class="a" style="left:11px;top:126px;width:1147px;height:2px;background:#767676;"></div>
<div class="a" style="left:11px;top:126px;width:2px;height:928px;background:#767676;"></div>
<div class="a" style="left:11px;top:1052px;width:1147px;height:2px;background:#f4f4f4;"></div>
<div class="a" style="left:1156px;top:126px;width:2px;height:928px;background:#f4f4f4;"></div>
<div class="a" style="left:22px;top:120px;width:68px;height:14px;background:#cdcdcd;"></div>
<div class="t" style="left:25.0px;top:120.86px;font-size:10.4px;letter-spacing:-0.242px;">Image Display</div>
<div class="a" style="left:16px;top:140px;width:1137px;height:2px;background:#767676;"></div>
<div class="a" style="left:16px;top:140px;width:2px;height:909px;background:#767676;"></div>
<div class="a" style="left:16px;top:1047px;width:1137px;height:2px;background:#f4f4f4;"></div>
<div class="a" style="left:1151px;top:140px;width:2px;height:909px;background:#f4f4f4;"></div>
<div class="a" style="left:18px;top:142px;width:532px;height:3px;background:#dc1edc;background-image:repeating-linear-gradient(90deg,#c41fc4 0 7px,#f6e0f6 7px 12px);"></div>
<div class="a" style="left:18px;top:142px;width:3px;height:452px;background:#dc1edc;background-image:repeating-linear-gradient(180deg,#c41fc4 0 7px,#f6e0f6 7px 12px);"></div>
<div class="a" style="left:18px;top:592px;width:532px;height:2px;background:#dc1edc;background-image:repeating-linear-gradient(90deg,#d020d0 0 7px,#8c8c8c 7px 12px);"></div>
<div class="a" style="left:548px;top:142px;width:2px;height:452px;background:#dc1edc;background-image:repeating-linear-gradient(180deg,#d020d0 0 7px,#8c8c8c 7px 12px);"></div>
<div class="a" style="left:18px;top:594px;width:534px;height:2px;background:#f4f4f4;"></div>
<div class="a" style="left:550px;top:142px;width:2px;height:454px;background:#f4f4f4;"></div>
<div class="a" style="left:21px;top:145px;width:527px;height:447px;background:#000;overflow:hidden;">
<svg style="left:0;top:0" width="527" height="447" viewBox="0 0 527 447">
<defs><filter color-interpolation-filters="sRGB" id="b1" x="-10%" y="-10%" width="120%" height="120%"><feGaussianBlur stdDeviation="0.9"/></filter>
<filter color-interpolation-filters="sRGB" id="b1b" x="-20%" y="-20%" width="140%" height="140%"><feGaussianBlur stdDeviation="2.2"/></filter>
<linearGradient id="nk1" x1="0" y1="0" x2="0" y2="1"><stop offset="0" stop-color="#1e1e1e"/><stop offset="0.6" stop-color="#171717"/><stop offset="1" stop-color="#000"/></linearGradient>
<linearGradient id="arc1" x1="0" y1="0" x2="0" y2="1"><stop offset="0" stop-color="#c8c8c8"/><stop offset="0.1" stop-color="#7a7a7a"/><stop offset="0.3" stop-color="#484848"/><stop offset="0.7" stop-color="#333"/><stop offset="1" stop-color="#1c1c1c"/></linearGradient></defs>
<g filter="url(#b1b)">
<path d="M232 186 L304 186 L310 226 L312 262 L226 262 L228 226z" fill="url(#nk1)"/>
</g>
<g filter="url(#b1)">
<path d="M264 18 C300 16 328 34 328 70 C330 110 330 150 318 172 C308 190 290 196 268 196 C244 196 226 190 214 172 C200 150 200 110 202 72 C204 36 230 18 264 18z" fill="#1b1b1b"/>
<path d="M240 22 L296 22 L292 40 L244 40z" fill="#0c0c0c"/>
<path d="M250 36h5 M262 37h4 M272 36h6 M284 37h4" stroke="#4a4a4a" stroke-width="2"/>
<circle cx="222.6" cy="51.5" r="14.5" fill="#2a2a2a"/><circle cx="222.6" cy="51.5" r="11" fill="#1d1d1d"/><circle cx="222.6" cy="51.5" r="7.6" fill="#050505"/>
<circle cx="308.5" cy="49.5" r="15.5" fill="#222"/><circle cx="308.5" cy="49.5" r="11.5" fill="#191919"/><circle cx="308.5" cy="49.5" r="7" fill="#1e1e1e"/>
<path d="M247.5 41 L287 41 L287 64 L296 72 L240 72 L247.5 64z" fill="#242424" stroke="#0a0a0a" stroke-width="1.4"/>
<ellipse cx="268" cy="128.6" rx="53.4" ry="60" fill="#282828" stroke="#0a0a0a" stroke-width="1.8"/>
<path d="M258 92 q3 12 -8 24 M278 90 q-2 14 10 22 l12 6 M266 110 q6 8 4 20" stroke="#1a1a1a" stroke-width="2" fill="none"/>
<ellipse cx="270" cy="124" rx="5" ry="8" fill="#1c1c1c"/>
<circle cx="246.5" cy="158.5" r="1.3" fill="#0c0c0c"/>
</g>
<g filter="url(#b1)">
<ellipse cx="209" cy="166" rx="6.5" ry="6" fill="#3a3a3a"/>
<path d="M205 169 l5 -1.5 l1.5 3 l-5 1z" fill="#d0d0d0"/>
<path d="M321.6 167.6 C326 160 337 158 343 170 C351 188 356 215 359.6 253" stroke="url(#arc1)" stroke-width="2" fill="none" stroke-linecap="round"/>
<path d="M322 167.4 C326 161.4 333 160.4 337 163.4" stroke="#e8e8e8" stroke-width="2.2" fill="none" stroke-linecap="round"/>
<path d="M186 200 L184 243 M192 219 q14 14 36 14 M200 206 q6 10 14 12 M214 240 l12 -6" stroke="#343434" stroke-width="2" fill="none"/>
<path d="M190 222 l4 3 M206 230 l10 3" stroke="#6a6a6a" stroke-width="1.6" fill="none"/>
<path d="M320 236 l14 4 M340 262 l6 20" stroke="#1c1c1c" stroke-width="2" fill="none"/>
</g>
</svg>
<div class="pt" style="top:5.63px;font-size:12px;left:3.6px;letter-spacing:0.526px;">Mayo Clinic</div>
<div class="pt" style="top:22.77px;font-size:14px;left:3.6px;letter-spacing:0.079px;">06162015_THP16_1</div>
<div class="pt" style="top:37.53px;font-size:12px;left:3.6px;letter-spacing:0.165px;">06162015_THP16_1</div>
<div class="pt" style="top:51.43px;font-size:12px;left:3.6px;letter-spacing:0.068px;">F  5.0 kg</div>
<div class="pt" style="top:203.43px;font-size:10.5px;left:3.6px;letter-spacing:0.002px;">W 4015</div>
<div class="pt" style="top:215.23px;font-size:10.5px;left:3.6px;letter-spacing:0.194px;">L 2104</div>
<div class="pt" style="top:327.73px;font-size:12px;left:3.6px;letter-spacing:0.314px;">Scan: 2</div>
<div class="pt" style="top:341.73px;font-size:12px;left:3.6px;letter-spacing:0.244px;">Slice: 1/1</div>
<div class="pt" style="top:355.73px;font-size:12px;left:3.6px;letter-spacing:0.211px;">Echo: 1/1</div>
<div class="pt" style="top:373.63px;font-size:12px;left:3.6px;letter-spacing:0.350px;">MSME (pvm)</div>
<div class="pt" style="top:387.63px;font-size:12px;left:3.6px;letter-spacing:0.014px;">TR: 300.0 ms</div>
<div class="pt" style="top:401.63px;font-size:12px;left:3.6px;letter-spacing:0.008px;">TE: 9.5 ms</div>
<div class="pt" style="top:415.63px;font-size:12px;left:3.6px;letter-spacing:0.420px;">FA: 180.0 deg</div>
<div class="pt" style="top:429.63px;font-size:12px;left:3.6px;letter-spacing:0.240px;">TA: 0h46m4s800ms NEX 1</div>
<div class="pt" style="top:5.63px;font-size:12px;right:6.2000000000000455px;text-align:right;letter-spacing:0.164px;">BRUKER 300MHz/7T</div>
<div class="pt" style="top:23.53px;font-size:12px;right:6.2000000000000455px;text-align:right;letter-spacing:0.337px;">Date: 16 Jun 2015</div>
<div class="pt" style="top:37.63px;font-size:12px;left:417.2px;letter-spacing:0.053px;">Time: 16:27</div>
<div class="pt" style="top:327.73px;font-size:12px;right:6.2000000000000455px;text-align:right;letter-spacing:0.030px;">SI 0.21/0.21 mm</div>
<div class="pt" style="top:341.73px;font-size:12px;right:6.2000000000000455px;text-align:right;letter-spacing:0.311px;">FOV 4.00/2.00/2.00 cm</div>
<div class="pt" style="top:355.73px;font-size:12px;right:6.2000000000000455px;text-align:right;letter-spacing:0.418px;">MTX 192/96/96</div>
<div class="pt" style="top:373.63px;font-size:12px;right:6.2000000000000455px;text-align:right;letter-spacing:0.105px;">Pos -5.62 mm P</div>
<div class="pt" style="top:387.63px;font-size:12px;right:7.400000000000091px;text-align:right;letter-spacing:0.235px;">Malaria Het: 1</div>
<div class="pt" style="top:401.63px;font-size:12px;right:7.400000000000091px;text-align:right;letter-spacing:0.299px;">test-Fang-T1, 2 : 1</div>
<svg style="left:0;top:0" width="527" height="447" viewBox="0 0 527 447" shape-rendering="crispEdges"><path d="M489.5 122 V310 M486 141.5 H489 M484 197.5 H489 M486 253.5 H489 M484 309.5 H489" stroke="#fff" stroke-width="1" fill="none"/><rect x="250.5" y="3.5" width="13" height="15" fill="#000" stroke="#fff" stroke-width="1"/><path d="M254.5 6 V17 M261.5 6 V17 M254.5 11.5 H261.5" stroke="#fff" stroke-width="1" fill="none"/><rect x="510.5" y="216.5" width="11" height="15" fill="#000" stroke="#fff" stroke-width="1"/><path d="M514.5 219 V229.5 H519.5" stroke="#fff" stroke-width="1" fill="none"/></svg>
<div class="pt" style="top:106.73px;font-size:10.5px;left:465.4px;letter-spacing:-0.250px;">cm</div>
<div class="pt" style="top:191.36px;font-size:11px;left:472.6px;">1</div>
<div class="pt" style="top:303.36px;font-size:11px;left:472.6px;">0</div>
</div>
<div class="a" style="left:551px;top:142px;width:532px;height:1px;background:#e8e8e8;"></div>
<div class="a" style="left:552px;top:143px;width:531px;height:2px;background:#767676;"></div>
<div class="a" style="left:551px;top:142px;width:1px;height:452px;background:#e8e8e8;"></div>
<div class="a" style="left:552px;top:143px;width:2px;height:451px;background:#767676;"></div>
<div class="a" style="left:552px;top:592px;width:531px;height:2px;background:#ffffff;"></div>
<div class="a" style="left:552px;top:594px;width:531px;height:2px;background:#ececec;"></div>
<div class="a" style="left:1081px;top:143px;width:2px;height:451px;background:#ffffff;"></div>
<div class="a" style="left:554px;top:145px;width:527px;height:447px;background:#000;overflow:hidden;">
<svg style="left:0;top:0" width="527" height="447" viewBox="0 0 527 447">
<defs><filter color-interpolation-filters="sRGB" id="b2" x="-10%" y="-10%" width="120%" height="120%"><feGaussianBlur stdDeviation="0.8"/></filter>
<filter color-interpolation-filters="sRGB" id="b2c" x="-20%" y="-20%" width="140%" height="140%"><feGaussianBlur stdDeviation="3.2"/></filter>
<filter color-interpolation-filters="sRGB" id="b2b" x="-20%" y="-20%" width="140%" height="140%"><feGaussianBlur stdDeviation="1.2"/></filter>
<filter color-interpolation-filters="sRGB" id="nz" x="0" y="0" width="100%" height="100%"><feTurbulence type="fractalNoise" baseFrequency="0.16 0.09" numOctaves="2" seed="7" result="t"/><feColorMatrix in="t" type="matrix" values="0 0 0 0 1  0 0 0 0 1  0 0 0 0 1  1.6 0 0 0 -0.62"/><feGaussianBlur stdDeviation="0.7"/></filter>
<radialGradient id="br2" cx="0.5" cy="0.5" r="0.5"><stop offset="0" stop-color="#4c4c4c"/><stop offset="0.75" stop-color="#474747"/><stop offset="0.9" stop-color="#3c3c3c"/><stop offset="1" stop-color="#2c2c2c"/></radialGradient>
<linearGradient id="er" x1="0" y1="0" x2="0" y2="1"><stop offset="0" stop-color="#8a8a8a"/><stop offset="1" stop-color="#d4d4d4"/></linearGradient>
<filter color-interpolation-filters="sRGB" id="mb" x="-20%" y="-20%" width="140%" height="140%"><feGaussianBlur stdDeviation="7"/></filter>
<mask id="bodymask"><path d="M200 266 C176 300 160 360 168 416 L172 432 L322 432 C332 400 328 352 310 316 C300 292 290 276 282 264 L260 232 L224 232z" fill="#fff" filter="url(#mb)"/></mask>
</defs>
<g filter="url(#b2)">
<path d="M243 64 C280 64 306 92 306 140 C308 175 306 200 292 220 L194 220 C180 200 180 175 180 140 C180 92 206 64 243 64z" fill="#070707"/>
<path d="M184 120 C178 160 180 190 186 210 M303 116 C310 150 310 172 306 190" stroke="#262626" stroke-width="2" fill="none"/>
<path d="M196 104 C188 112 184 124 182 136 M290 104 C298 112 302 124 304 136" stroke="#1e1e1e" stroke-width="3" fill="none"/>
<path d="M224 72 L261 72 L261 96 L270 104 L216 104 L224 96z" fill="#3a3a3a"/>
<path d="M243.2 96 C272 96 298 122 298 160 C298 196 274 223.5 243.2 223.5 C212 223.5 188.4 196 188.4 160 C188.4 122 214 96 243.2 96z" fill="url(#br2)"/>
<path d="M243.2 190 m-38 0 q38 22 76 0 M243.2 200 m-30 0 q30 16 60 0 M243.2 209 m-22 0 q22 10 44 0" stroke="#3a3a3a" stroke-width="1.6" fill="none"/>
<circle cx="200.7" cy="83" r="12.2" fill="none" stroke="#cfcfcf" stroke-width="4.6"/>
<path d="M190 90 a12.2 12.2 0 0 0 18 4" stroke="#fff" stroke-width="4" fill="none"/>
<circle cx="292.5" cy="83" r="14.6" fill="none" stroke="url(#er)" stroke-width="5.2"/>
<circle cx="200.7" cy="83" r="16.5" fill="none" stroke="#303030" stroke-width="2"/>
<circle cx="292.5" cy="83" r="19.5" fill="none" stroke="#2a2a2a" stroke-width="2"/>
</g>
<g filter="url(#b2)">
<path d="M231.0 119.4 L236.4 119.8 L235.2 134 C232 140 226 143.4 207.4 156.6 L205.4 154.4 C219 143 225.6 138 228 132z" fill="#fafafa"/>
<path d="M247.0 118.2 L252.2 118.2 L256.4 133 C258 137 261 140 263 142.4 L258 141.6 C251.6 138.6 249.2 134 248.6 130z" fill="#fafafa"/>
<path d="M273.6 153.2 L286 164.6 L284.8 166 L272.6 154.6z" fill="#e8e8e8"/>
<path d="M229 141 C236 137 250 137 259 141.6" stroke="#8c8c8c" stroke-width="1.6" fill="none"/>
<path d="M237.2 141 L246.4 141 L244.2 150 L243.6 162 L239 162 L239.2 150z" fill="#f2f2f2"/>
<path d="M240.6 180.4 L246 195.4 L235.6 195.4z" fill="#f6f6f6"/>
<path d="M177 206 C178 199 186 196.4 191 201" stroke="#f2f2f2" stroke-width="3" fill="none" stroke-linecap="round"/>
<path d="M176 206 C172 212 170 220 168 226" stroke="#6a6a6a" stroke-width="2" fill="none"/>
<path d="M302 186 L313 184 L317 196 L304 198 L300 206z" fill="#dcdcdc"/>
<path d="M309 186 C311 178 311 172 310 166" stroke="#9a9a9a" stroke-width="2.4" fill="none"/>
<path d="M300 200 L296 214" stroke="#8a8a8a" stroke-width="2" fill="none"/>
</g>
<g mask="url(#bodymask)"><rect x="140" y="216" width="220" height="231" filter="url(#nz)" opacity="0.13"/></g>
<g filter="url(#b2c)" fill="none" stroke-linecap="round">
<path d="M194 270 C180 290 168 325 162 355 C158 380 160 400 167 420" stroke="#4a4a4a" stroke-width="7"/>
<path d="M282 262 C292 280 304 296 314 316 C326 340 334 360 330 384 C328 396 324 402 320 408" stroke="#585858" stroke-width="8"/>
<path d="M308 340 C300 352 312 364 310 378 C308 388 314 394 316 400" stroke="#4a4a4a" stroke-width="7"/>
<path d="M232 250 C228 290 226 330 230 380 M250 250 C254 290 262 340 268 400 M212 280 C206 320 204 360 210 404 M276 290 C284 320 290 350 294 396" stroke="#1c1c1c" stroke-width="4"/>
<path d="M214 236 C204 246 196 256 190 266 M268 236 C276 246 280 254 284 262" stroke="#2a2a2a" stroke-width="5"/>
</g>
<g filter="url(#b2b)" fill="none" stroke-linecap="round">
<path d="M192 272 C180 292 170 322 164 352" stroke="#8a8a8a" stroke-width="2.2"/>
<path d="M164 356 C160 380 161 398 166 414" stroke="#6a6a6a" stroke-width="2" stroke-dasharray="9 5 14 6"/>
<path d="M284 264 C292 280 304 296 314 316" stroke="#b4b4b4" stroke-width="2.6"/>
<path d="M314 316 C326 340 334 360 330 384 C328 396 324 402 320 408" stroke="#a0a0a0" stroke-width="2.6"/>
<path d="M310 342 C304 352 314 362 312 376 C310 386 316 392 318 398" stroke="#7a7a7a" stroke-width="2.2"/>
<path d="M290 258 C306 256 322 242 336 245 C346 250 350 260 352 270" stroke="#3c3c3c" stroke-width="2.4"/>
<path d="M160 274 C170 270 182 268 190 264" stroke="#4a4a4a" stroke-width="2"/>
<path d="M288 262 L300 258" stroke="#8a8a8a" stroke-width="3"/>
</g>
</svg>
<div class="pt" style="top:5.63px;font-size:12px;left:3.6px;letter-spacing:0.526px;">Mayo Clinic</div>
<div class="pt" style="top:22.77px;font-size:14px;left:3.6px;letter-spacing:0.059px;">01112023_Expt176_ECB_2_RRP</div>
<div class="pt" style="top:37.53px;font-size:12px;left:3.6px;letter-spacing:0.233px;">01112023_Expt176_ECB_2_RRP</div>
<div class="pt" style="top:51.43px;font-size:12px;left:3.6px;letter-spacing:0.068px;">F  5.0 kg</div>
<div class="pt" style="top:203.43px;font-size:10.5px;left:3.6px;letter-spacing:0.002px;">W 2209</div>
<div class="pt" style="top:215.23px;font-size:10.5px;left:3.6px;letter-spacing:0.241px;">L 1185</div>
<div class="pt" style="top:327.73px;font-size:12px;left:3.6px;letter-spacing:0.314px;">Scan: 2</div>
<div class="pt" style="top:341.73px;font-size:12px;left:3.6px;letter-spacing:0.244px;">Slice: 1/1</div>
<div class="pt" style="top:355.73px;font-size:12px;left:3.6px;letter-spacing:0.211px;">Echo: 1/1</div>
<div class="pt" style="top:373.63px;font-size:12px;left:3.6px;letter-spacing:0.086px;">RARE (pvm)</div>
<div class="pt" style="top:387.63px;font-size:12px;left:3.6px;letter-spacing:0.007px;">TR: 1500.0 ms</div>
<div class="pt" style="top:401.63px;font-size:12px;left:3.6px;letter-spacing:0.028px;">TE: 65.0 ms</div>
<div class="pt" style="top:415.63px;font-size:12px;left:3.6px;letter-spacing:0.420px;">FA: 180.0 deg</div>
<div class="pt" style="top:429.63px;font-size:12px;left:3.6px;letter-spacing:0.212px;">TA: 0h14m24s0ms NEX 1</div>
<div class="pt" style="top:5.63px;font-size:12px;right:6.2000000000000455px;text-align:right;letter-spacing:0.164px;">BRUKER 300MHz/7T</div>
<div class="pt" style="top:23.53px;font-size:12px;right:6.2000000000000455px;text-align:right;letter-spacing:0.342px;">Date: 11 Jan 2023</div>
<div class="pt" style="top:37.63px;font-size:12px;left:417.2px;letter-spacing:0.055px;">Time: 8:40</div>
<div class="pt" style="top:327.73px;font-size:12px;right:6.2000000000000455px;text-align:right;letter-spacing:0.077px;">SI 0.20/0.20 mm</div>
<div class="pt" style="top:341.73px;font-size:12px;right:6.2000000000000455px;text-align:right;letter-spacing:0.320px;">FOV 4.00/1.92/1.92 cm</div>
<div class="pt" style="top:355.73px;font-size:12px;right:6.2000000000000455px;text-align:right;letter-spacing:0.449px;">MTX 200/96/96</div>
<div class="pt" style="top:373.63px;font-size:12px;right:6.2000000000000455px;text-align:right;letter-spacing:0.112px;">Pos -6.80 mm P</div>
<div class="pt" style="top:387.63px;font-size:12px;right:7.400000000000091px;text-align:right;letter-spacing:0.362px;">01112023_Expt176_ZPT: 1</div>
<div class="pt" style="top:401.63px;font-size:12px;right:7.400000000000091px;text-align:right;letter-spacing:0.317px;">TEST-Fang-T2, 2 : 1</div>
<svg style="left:0;top:0" width="527" height="447" viewBox="0 0 527 447" shape-rendering="crispEdges"><path d="M489.5 122 V310 M486 141.5 H489 M484 197.5 H489 M486 253.5 H489 M484 309.5 H489" stroke="#fff" stroke-width="1" fill="none"/><rect x="250.5" y="3.5" width="13" height="15" fill="#000" stroke="#fff" stroke-width="1"/><path d="M254.5 6 V17 M261.5 6 V17 M254.5 11.5 H261.5" stroke="#fff" stroke-width="1" fill="none"/><rect x="510.5" y="216.5" width="11" height="15" fill="#000" stroke="#fff" stroke-width="1"/><path d="M514.5 219 V229.5 H519.5" stroke="#fff" stroke-width="1" fill="none"/></svg>
<div class="pt" style="top:106.73px;font-size:10.5px;left:465.4px;letter-spacing:-0.250px;">cm</div>
<div class="pt" style="top:191.36px;font-size:11px;left:472.6px;">1</div>
<div class="pt" style="top:303.36px;font-size:11px;left:472.6px;">0</div>
</div>
<div class="a" style="left:18px;top:595px;width:532px;height:1px;background:#e8e8e8;"></div>
<div class="a" style="left:19px;top:596px;width:531px;height:2px;background:#767676;"></div>
<div class="a" style="left:18px;top:595px;width:1px;height:452px;background:#e8e8e8;"></div>
<div class="a" style="left:19px;top:596px;width:2px;height:451px;background:#767676;"></div>
<div class="a" style="left:19px;top:1045px;width:531px;height:2px;background:#ffffff;"></div>
<div class="a" style="left:19px;top:1047px;width:531px;height:2px;background:#ececec;"></div>
<div class="a" style="left:548px;top:596px;width:2px;height:451px;background:#ffffff;"></div>
<div class="a" style="left:21px;top:598px;width:527px;height:447px;background:#000;overflow:hidden;">
<svg style="left:0;top:0" width="527" height="447" viewBox="0 0 527 447">
<defs><filter color-interpolation-filters="sRGB" id="nz3" x="0" y="0" width="100%" height="100%"><feTurbulence type="fractalNoise" baseFrequency="0.11 0.08" numOctaves="2" seed="11" result="t"/><feColorMatrix in="t" type="matrix" values="0 0 0 0 1  0 0 0 0 1  0 0 0 0 1  1.5 0 0 0 -0.6"/><feGaussianBlur stdDeviation="1.2"/></filter>
<radialGradient id="fm3" cx="0.5" cy="0.62" r="0.5"><stop offset="0" stop-color="#fff"/><stop offset="0.7" stop-color="#fff" stop-opacity="0.6"/><stop offset="1" stop-color="#fff" stop-opacity="0"/></radialGradient>
<mask id="mk3"><rect x="130" y="250" width="290" height="200" fill="url(#fm3)"/></mask></defs>
<g mask="url(#mk3)"><rect x="130" y="250" width="290" height="200" filter="url(#nz3)" opacity="0.075"/></g>
</svg>
<div class="pt" style="top:5.63px;font-size:12px;left:3.6px;letter-spacing:0.526px;">Mayo Clinic</div>
<div class="pt" style="top:22.77px;font-size:14px;left:3.6px;letter-spacing:0.059px;">01112023_Expt176_ECB_2_RRP</div>
<div class="pt" style="top:37.53px;font-size:12px;left:3.6px;letter-spacing:0.233px;">01112023_Expt176_ECB_2_RRP</div>
<div class="pt" style="top:51.43px;font-size:12px;left:3.6px;letter-spacing:0.068px;">F  5.0 kg</div>
<div class="pt" style="top:203.43px;font-size:10.5px;left:3.6px;letter-spacing:0.002px;">W 3806</div>
<div class="pt" style="top:215.23px;font-size:10.5px;left:3.6px;letter-spacing:0.194px;">L 1967</div>
<div class="pt" style="top:327.73px;font-size:12px;left:3.6px;letter-spacing:0.314px;">Scan: 2</div>
<div class="pt" style="top:341.73px;font-size:12px;left:3.6px;letter-spacing:0.244px;">Slice: 1/1</div>
<div class="pt" style="top:355.73px;font-size:12px;left:3.6px;letter-spacing:0.211px;">Echo: 1/1</div>
<div class="pt" style="top:373.63px;font-size:12px;left:3.6px;letter-spacing:0.086px;">RARE (pvm)</div>
<div class="pt" style="top:387.63px;font-size:12px;left:3.6px;letter-spacing:0.007px;">TR: 1500.0 ms</div>
<div class="pt" style="top:401.63px;font-size:12px;left:3.6px;letter-spacing:0.028px;">TE: 65.0 ms</div>
<div class="pt" style="top:415.63px;font-size:12px;left:3.6px;letter-spacing:0.420px;">FA: 180.0 deg</div>
<div class="pt" style="top:429.63px;font-size:12px;left:3.6px;letter-spacing:0.212px;">TA: 0h14m24s0ms NEX 1</div>
<div class="pt" style="top:5.63px;font-size:12px;right:6.2000000000000455px;text-align:right;letter-spacing:0.164px;">BRUKER 300MHz/7T</div>
<div class="pt" style="top:23.53px;font-size:12px;right:6.2000000000000455px;text-align:right;letter-spacing:0.342px;">Date: 11 Jan 2023</div>
<div class="pt" style="top:37.63px;font-size:12px;left:417.2px;letter-spacing:0.055px;">Time: 8:40</div>
<div class="pt" style="top:327.73px;font-size:12px;right:6.2000000000000455px;text-align:right;letter-spacing:0.077px;">SI 0.20/0.20 mm</div>
<div class="pt" style="top:341.73px;font-size:12px;right:6.2000000000000455px;text-align:right;letter-spacing:0.320px;">FOV 4.00/1.92/1.92 cm</div>
<div class="pt" style="top:355.73px;font-size:12px;right:6.2000000000000455px;text-align:right;letter-spacing:0.449px;">MTX 200/96/96</div>
<div class="pt" style="top:373.63px;font-size:12px;right:6.2000000000000455px;text-align:right;letter-spacing:0.186px;">Pos -11.00 mm P</div>
<div class="pt" style="top:387.63px;font-size:12px;right:7.400000000000091px;text-align:right;letter-spacing:0.362px;">01112023_Expt176_ZPT: 1</div>
<div class="pt" style="top:401.63px;font-size:12px;right:7.400000000000091px;text-align:right;letter-spacing:0.317px;">TEST-Fang-T2, 2 : 1</div>
<svg style="left:0;top:0" width="527" height="447" viewBox="0 0 527 447" shape-rendering="crispEdges"><path d="M489.5 122 V310 M486 141.5 H489 M484 197.5 H489 M486 253.5 H489 M484 309.5 H489" stroke="#fff" stroke-width="1" fill="none"/><rect x="250.5" y="3.5" width="13" height="15" fill="#000" stroke="#fff" stroke-width="1"/><path d="M254.5 6 V17 M261.5 6 V17 M254.5 11.5 H261.5" stroke="#fff" stroke-width="1" fill="none"/><rect x="510.5" y="216.5" width="11" height="15" fill="#000" stroke="#fff" stroke-width="1"/><path d="M514.5 219 V229.5 H519.5" stroke="#fff" stroke-width="1" fill="none"/></svg>
<div class="pt" style="top:106.73px;font-size:10.5px;left:465.4px;letter-spacing:-0.250px;">cm</div>
<div class="pt" style="top:191.36px;font-size:11px;left:472.6px;">1</div>
<div class="pt" style="top:303.36px;font-size:11px;left:472.6px;">0</div>
</div>
<div class="a" style="left:551px;top:595px;width:532px;height:1px;background:#e8e8e8;"></div>
<div class="a" style="left:552px;top:596px;width:531px;height:2px;background:#767676;"></div>
<div class="a" style="left:551px;top:595px;width:1px;height:452px;background:#e8e8e8;"></div>
<div class="a" style="left:552px;top:596px;width:2px;height:451px;background:#767676;"></div>
<div class="a" style="left:552px;top:1045px;width:531px;height:2px;background:#ffffff;"></div>
<div class="a" style="left:552px;top:1047px;width:531px;height:2px;background:#ececec;"></div>
<div class="a" style="left:1081px;top:596px;width:2px;height:451px;background:#ffffff;"></div>
<div class="a" style="left:554px;top:598px;width:527px;height:447px;background:#000;overflow:hidden;">
<svg style="left:0;top:0" width="527" height="447" viewBox="0 0 527 447">
<defs><filter color-interpolation-filters="sRGB" id="nz4" x="0" y="0" width="100%" height="100%"><feTurbulence type="fractalNoise" baseFrequency="0.11 0.08" numOctaves="2" seed="23" result="t"/><feColorMatrix in="t" type="matrix" values="0 0 0 0 1  0 0 0 0 1  0 0 0 0 1  1.5 0 0 0 -0.6"/><feGaussianBlur stdDeviation="1.2"/></filter>
<radialGradient id="fm4" cx="0.5" cy="0.62" r="0.5"><stop offset="0" stop-color="#fff"/><stop offset="0.7" stop-color="#fff" stop-opacity="0.6"/><stop offset="1" stop-color="#fff" stop-opacity="0"/></radialGradient>
<mask id="mk4"><rect x="130" y="250" width="290" height="200" fill="url(#fm4)"/></mask></defs>
<g mask="url(#mk4)"><rect x="130" y="250" width="290" height="200" filter="url(#nz4)" opacity="0.075"/></g>
</svg>
<div class="pt" style="top:5.63px;font-size:12px;left:3.6px;letter-spacing:0.526px;">Mayo Clinic</div>
<div class="pt" style="top:22.77px;font-size:14px;left:3.6px;letter-spacing:0.059px;">01112023_Expt176_ECB_2_RRP</div>
<div class="pt" style="top:37.53px;font-size:12px;left:3.6px;letter-spacing:0.233px;">01112023_Expt176_ECB_2_RRP</div>
<div class="pt" style="top:51.43px;font-size:12px;left:3.6px;letter-spacing:0.068px;">F  5.0 kg</div>
<div class="pt" style="top:203.43px;font-size:10.5px;left:3.6px;letter-spacing:0.002px;">W 3806</div>
<div class="pt" style="top:215.23px;font-size:10.5px;left:3.6px;letter-spacing:0.194px;">L 1967</div>
<div class="pt" style="top:327.73px;font-size:12px;left:3.6px;letter-spacing:0.314px;">Scan: 2</div>
<div class="pt" style="top:341.73px;font-size:12px;left:3.6px;letter-spacing:0.244px;">Slice: 1/1</div>
<div class="pt" style="top:355.73px;font-size:12px;left:3.6px;letter-spacing:0.211px;">Echo: 1/1</div>
<div class="pt" style="top:373.63px;font-size:12px;left:3.6px;letter-spacing:0.086px;">RARE (pvm)</div>
<div class="pt" style="top:387.63px;font-size:12px;left:3.6px;letter-spacing:0.007px;">TR: 1500.0 ms</div>
<div class="pt" style="top:401.63px;font-size:12px;left:3.6px;letter-spacing:0.028px;">TE: 65.0 ms</div>
<div class="pt" style="top:415.63px;font-size:12px;left:3.6px;letter-spacing:0.420px;">FA: 180.0 deg</div>
<div class="pt" style="top:429.63px;font-size:12px;left:3.6px;letter-spacing:0.212px;">TA: 0h14m24s0ms NEX 1</div>
<div class="pt" style="top:5.63px;font-size:12px;right:6.2000000000000455px;text-align:right;letter-spacing:0.164px;">BRUKER 300MHz/7T</div>
<div class="pt" style="top:23.53px;font-size:12px;right:6.2000000000000455px;text-align:right;letter-spacing:0.342px;">Date: 11 Jan 2023</div>
<div class="pt" style="top:37.63px;font-size:12px;left:417.2px;letter-spacing:0.055px;">Time: 8:40</div>
<div class="pt" style="top:327.73px;font-size:12px;right:6.2000000000000455px;text-align:right;letter-spacing:0.077px;">SI 0.20/0.20 mm</div>
<div class="pt" style="top:341.73px;font-size:12px;right:6.2000000000000455px;text-align:right;letter-spacing:0.320px;">FOV 4.00/1.92/1.92 cm</div>
<div class="pt" style="top:355.73px;font-size:12px;right:6.2000000000000455px;text-align:right;letter-spacing:0.449px;">MTX 200/96/96</div>
<div class="pt" style="top:373.63px;font-size:12px;right:6.2000000000000455px;text-align:right;letter-spacing:0.140px;">Pos -10.80 mm P</div>
<div class="pt" style="top:387.63px;font-size:12px;right:7.400000000000091px;text-align:right;letter-spacing:0.362px;">01112023_Expt176_ZPT: 1</div>
<div class="pt" style="top:401.63px;font-size:12px;right:7.400000000000091px;text-align:right;letter-spacing:0.317px;">TEST-Fang-T2, 2 : 1</div>
<svg style="left:0;top:0" width="527" height="447" viewBox="0 0 527 447" shape-rendering="crispEdges"><path d="M489.5 122 V310 M486 141.5 H489 M484 197.5 H489 M486 253.5 H489 M484 309.5 H489" stroke="#fff" stroke-width="1" fill="none"/><rect x="250.5" y="3.5" width="13" height="15" fill="#000" stroke="#fff" stroke-width="1"/><path d="M254.5 6 V17 M261.5 6 V17 M254.5 11.5 H261.5" stroke="#fff" stroke-width="1" fill="none"/><rect x="510.5" y="216.5" width="11" height="15" fill="#000" stroke="#fff" stroke-width="1"/><path d="M514.5 219 V229.5 H519.5" stroke="#fff" stroke-width="1" fill="none"/></svg>
<div class="pt" style="top:106.73px;font-size:10.5px;left:465.4px;letter-spacing:-0.250px;">cm</div>
<div class="pt" style="top:191.36px;font-size:11px;left:472.6px;">1</div>
<div class="pt" style="top:303.36px;font-size:11px;left:472.6px;">0</div>
</div>
<div class="sunken" style="left:1105px;top:600px;width:38px;height:18px;"></div><div class="t" style="left:1107.2px;top:602.03px;font-size:12px;letter-spacing:-0.246px;">C:131</div>
<div class="sunken" style="left:1103px;top:620px;width:40px;height:18px;"></div><div class="t" style="left:1106.2px;top:622.03px;font-size:12px;letter-spacing:-0.114px;">W:248</div>
<div class="sunken" style="left:1117px;top:640px;width:26px;height:19px;"></div><div class="t" style="left:1119.3px;top:642.03px;font-size:12px;letter-spacing:0.123px;">255</div>
<div class="sunken" style="left:1119px;top:666px;width:21px;height:331px;background:linear-gradient(180deg,#ffffff 0%,#e8e8e8 10%,#8a8a8a 50%,#1a1a1a 88%,#000 100%);"></div>
<div class="sunken" style="left:1117px;top:1004px;width:26px;height:19px;"></div><div class="t" style="left:1127.5px;top:1006.03px;font-size:12px;letter-spacing:-0.388px;">7</div>
<div class="a" style="left:4px;top:1057px;width:1160px;height:1px;background:#7a7a7a;"></div>
<div class="a" style="left:4px;top:1058px;width:1160px;height:1px;background:#eeeeee;"></div>
<div class="raised" style="left:1144px;top:1054px;width:10px;height:9px;border-width:1px 2px 2px 1px;"></div>
<div class="a" style="left:11px;top:1070px;width:502px;height:2px;background:#767676;"></div>
<div class="a" style="left:11px;top:1070px;width:2px;height:56px;background:#767676;"></div>
<div class="a" style="left:11px;top:1124px;width:502px;height:2px;background:#f4f4f4;"></div>
<div class="a" style="left:511px;top:1070px;width:2px;height:56px;background:#f4f4f4;"></div>
<div class="a" style="left:22px;top:1064px;width:60px;height:14px;background:#cdcdcd;"></div>
<div class="t" style="left:25.4px;top:1063.96px;font-size:10.4px;letter-spacing:-0.091px;">Display Log</div>
<div class="sunken" style="left:16px;top:1082px;width:492px;height:38px;background:#fff;"></div>
<div class="t" style="left:25px;top:1084.75px;font-size:11.65px;font-weight:bold;font-family:'Liberation Mono',monospace;">redefinition of active window: now #0 selected</div>
<div class="t" style="left:25px;top:1100.65px;font-size:11.65px;font-weight:bold;font-family:'Liberation Mono',monospace;">redefinition of active window: now #0 selected</div>
<div class="a" style="left:488px;top:1084px;width:18px;height:34px;background:#cdcdcd;border-left:2px solid #5a5a8a;box-sizing:border-box;"></div>
<svg style="left:490px;top:1084px" width="16" height="34" viewBox="0 0 16 34"><path d="M8 1 L14.5 13 L1.5 13z" fill="#9c9cc8" stroke="#5a5a8a" stroke-width="1"/><path d="M2 15.5 H14 M2 18.5 H14" stroke="#5a5a8a" stroke-width="1.4"/><path d="M8 33 L14.5 21 L1.5 21z" fill="#b4b4d8" stroke="#5a5a8a" stroke-width="1"/></svg>
<div class="raised" style="left:518px;top:1074px;width:24px;height:22px;"></div>
<div class="t" style="left:521.4px;top:1078.37px;font-size:14px;">All</div>
<div class="raised" style="left:555px;top:1069px;width:177px;height:32px;border-width:2px;"></div><div class="a" style="left:557.5px;top:1072.5px;width:150.5px;height:23.5px;background:#fff;"></div><svg style="left:711px;top:1075px" width="20" height="20" viewBox="0 0 20 20"><path d="M2.5 3 H15.5 L9 15z" fill="#cdcdcd"/><path d="M2.5 3 H15.5" stroke="#f6f6f6" stroke-width="1.4"/><path d="M2.5 3 L9 15" stroke="#f6f6f6" stroke-width="1.3"/><path d="M15.5 3 L9 15" stroke="#7a7a7a" stroke-width="1.5"/><path d="M2.5 17 H15.5" stroke="#f6f6f6" stroke-width="1"/><path d="M2.5 18 H15.5" stroke="#7a7a7a" stroke-width="1"/></svg><div class="t" style="left:562.6px;top:1078.17px;font-size:12.2px;letter-spacing:0.1px;">frame</div>
<div class="raised" style="left:744px;top:1069px;width:202px;height:32px;border-width:2px;"></div><div class="a" style="left:746.5px;top:1072.5px;width:175.5px;height:23.5px;background:#fff;"></div><svg style="left:925px;top:1075px" width="20" height="20" viewBox="0 0 20 20"><path d="M2.5 3 H15.5 L9 15z" fill="#cdcdcd"/><path d="M2.5 3 H15.5" stroke="#f6f6f6" stroke-width="1.4"/><path d="M2.5 3 L9 15" stroke="#f6f6f6" stroke-width="1.3"/><path d="M15.5 3 L9 15" stroke="#7a7a7a" stroke-width="1.5"/><path d="M2.5 17 H15.5" stroke="#f6f6f6" stroke-width="1"/><path d="M2.5 18 H15.5" stroke="#7a7a7a" stroke-width="1"/></svg><div class="t" style="left:751.6px;top:1078.17px;font-size:12.2px;letter-spacing:0.1px;">22</div>
<div class="raised" style="left:951px;top:1065px;width:18px;height:18px;"></div>
<div class="raised" style="left:951px;top:1088px;width:18px;height:18px;"></div>
<svg style="left:951px;top:1065px" width="18" height="41" viewBox="0 0 18 41"><path d="M9 3.5 L14 14 H4z M9 37.5 L14 27 H4z" fill="#101010"/></svg>
<div class="raised" style="left:985px;top:1080px;width:10px;height:10px;border-width:1px 2px 2px 1px;border-color:#eee #777 #777 #eee;"></div>
<div class="t" style="left:1001.6px;top:1077.87px;font-size:12.2px;color:#1a1a4c;letter-spacing:0.341px;">Viewport Advance</div>
<div class="raised" style="left:1120px;top:1074px;width:36px;height:23px;"></div>
<div class="t" style="left:1122.8px;top:1077.97px;font-size:14px;letter-spacing:-0.049px;">Hide</div>
</div></body></html>
